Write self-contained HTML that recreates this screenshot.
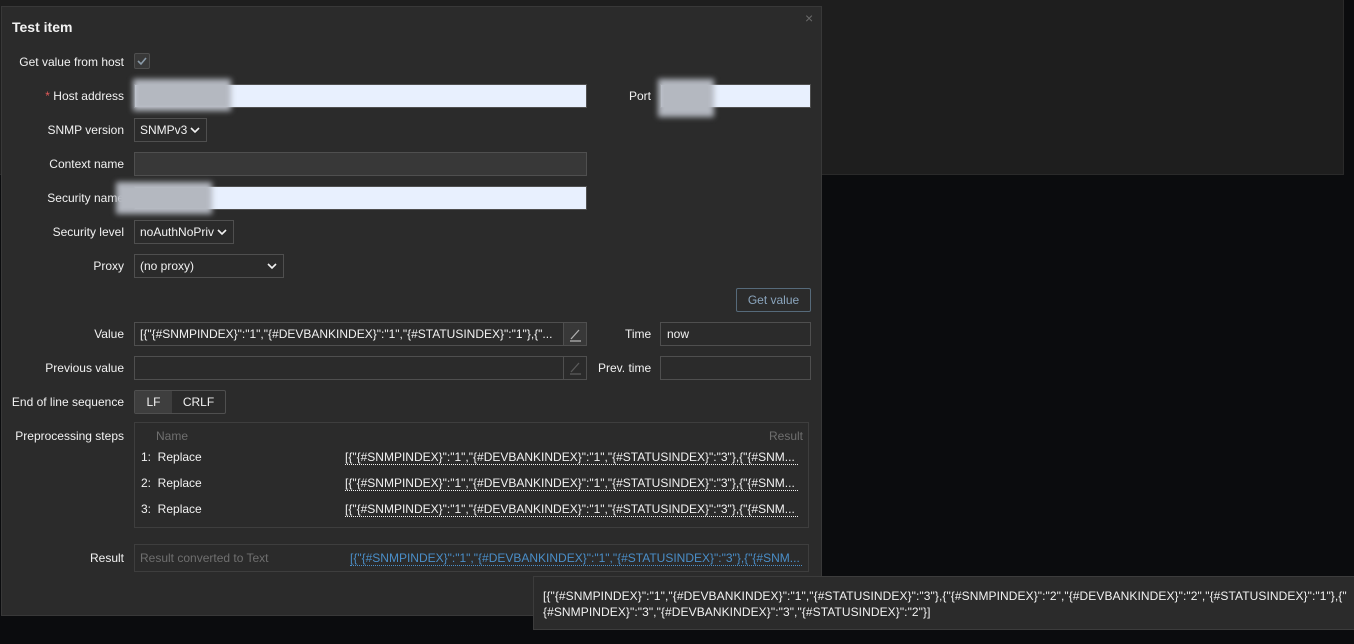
<!DOCTYPE html>
<html><head><meta charset="utf-8"><style>
*{box-sizing:border-box;margin:0;padding:0}
body{width:1354px;height:644px;background:#0b0c0e;font-family:"Liberation Sans",Arial,sans-serif;font-size:12px;color:#f2f2f2;position:relative;overflow:hidden}
.a{position:absolute}
.lbl{position:absolute;right:1230px;text-align:right;white-space:nowrap;color:#f2f2f2}
.inp{position:absolute;border:1px solid #4f4f4f;background:#383838;height:24px;}
.wh{background:#e8f0fe;border-color:#4f4f4f}
.sel{position:absolute;border:1px solid #4f4f4f;background:#2b2b2b;height:24px;padding:4px 5px;white-space:nowrap}
.sel svg{position:absolute;right:6px;top:8px}
.blur{position:absolute;background:#b4b8c0;filter:blur(3px)}
.txt{position:absolute;white-space:nowrap;overflow:hidden}
.dot{border-bottom:1px dotted #f2f2f2;line-height:14px}
</style></head><body>
<div class="a" style="left:0;top:0;width:1344px;height:175px;background:#1e1e1e;border-right:1px solid #2a2a2a;border-bottom:1px solid #2a2a2a"></div>
<div class="a" style="left:1px;top:6px;width:821px;height:610px;background:#2b2b2b;border:1px solid #383838"></div>
<div class="a" style="left:12px;top:19px;font-size:14px;font-weight:bold;color:#f2f2f2">Test item</div>
<div class="a" style="left:805px;top:10px;color:#6a6a6a;font-size:14px">×</div>

<div class="lbl" style="top:55px">Get value from host</div>
<div class="a" style="left:134px;top:53px;width:16px;height:16px;border:1px solid #4f4f4f;background:#383838;border-radius:2px"><svg width="14" height="14" viewBox="0 0 14 14" style="position:absolute;left:0;top:0"><path d="M3 7l3 3 5-6" stroke="#8a9aa8" stroke-width="1.6" fill="none"/></svg></div>

<div class="lbl" style="top:89px"><span style="color:#e45959">*</span> Host address</div>
<div class="inp wh" style="left:134px;top:84px;width:453px"></div>
<div class="blur" style="left:133px;top:79px;width:98px;height:32px"></div>
<div class="a" style="left:629px;top:89px">Port</div>
<div class="inp wh" style="left:660px;top:84px;width:151px"></div>
<div class="blur" style="left:658px;top:79px;width:56px;height:38px"></div>

<div class="lbl" style="top:123px">SNMP version</div>
<div class="sel" style="left:134px;top:118px;width:73px">SNMPv3<svg width="10" height="7"><path d="M1 1l4 4 4-4" stroke="#f2f2f2" stroke-width="1.6" fill="none"/></svg></div>

<div class="lbl" style="top:157px">Context name</div>
<div class="inp" style="left:134px;top:152px;width:453px"></div>

<div class="lbl" style="top:191px">Security name</div>
<div class="inp wh" style="left:134px;top:186px;width:453px"></div>
<div class="blur" style="left:116px;top:182px;width:96px;height:32px"></div>

<div class="lbl" style="top:225px">Security level</div>
<div class="sel" style="left:134px;top:220px;width:100px">noAuthNoPriv<svg width="10" height="7"><path d="M1 1l4 4 4-4" stroke="#f2f2f2" stroke-width="1.6" fill="none"/></svg></div>

<div class="lbl" style="top:259px">Proxy</div>
<div class="sel" style="left:134px;top:254px;width:150px">(no proxy)<svg width="10" height="7"><path d="M1 1l4 4 4-4" stroke="#f2f2f2" stroke-width="1.6" fill="none"/></svg></div>

<div class="a" style="left:736px;top:288px;width:75px;height:24px;border:1px solid #566a7a;border-radius:2px;color:#8aa4bc;text-align:center;line-height:22px">Get value</div>

<div class="lbl" style="top:327px">Value</div>
<div class="inp" style="left:134px;top:322px;width:453px;background:#2b2b2b"></div>
<div class="txt" style="left:140px;top:327px;width:420px">[{"{#SNMPINDEX}":"1","{#DEVBANKINDEX}":"1","{#STATUSINDEX}":"1"},{"...</div>
<div class="a" style="left:563px;top:322px;width:24px;height:24px;border:1px solid #4f4f4f;background:#383838"><svg width="22" height="22"><path d="M7 16L15 7" stroke="#b0b0b0" stroke-width="1.3"/><path d="M6 18h11" stroke="#b0b0b0" stroke-width="1.3"/></svg></div>
<div class="a" style="left:625px;top:327px">Time</div>
<div class="inp" style="left:660px;top:322px;width:151px;background:#2b2b2b"></div>
<div class="a" style="left:667px;top:327px">now</div>

<div class="lbl" style="top:361px">Previous value</div>
<div class="inp" style="left:134px;top:356px;width:453px;background:#2b2b2b"></div>
<div class="a" style="left:563px;top:356px;width:24px;height:24px;border-left:1px solid #4f4f4f"><svg width="22" height="22"><path d="M7 16L15 7" stroke="#5a5a5a" stroke-width="1.3"/><path d="M6 18h11" stroke="#5a5a5a" stroke-width="1.3"/></svg></div>
<div class="a" style="left:598px;top:361px">Prev. time</div>
<div class="inp" style="left:660px;top:356px;width:151px;background:#2b2b2b"></div>

<div class="lbl" style="top:395px">End of line sequence</div>
<div class="a" style="left:134px;top:390px;width:92px;height:24px;border:1px solid #4f4f4f;border-radius:2px;background:#2b2b2b"></div>
<div class="a" style="left:135px;top:391px;width:37px;height:22px;background:#3e3e3e;text-align:center;line-height:22px">LF</div>
<div class="a" style="left:172px;top:391px;width:53px;height:22px;text-align:center;line-height:22px">CRLF</div>

<div class="lbl" style="top:429px">Preprocessing steps</div>
<div class="a" style="left:134px;top:422px;width:675px;height:106px;border:1px solid #3e3e3e"></div>
<div class="a" style="left:156px;top:429px;color:#6f6f6f">Name</div>
<div class="a" style="left:769px;top:429px;color:#6f6f6f">Result</div>
<div class="a" style="left:141px;top:450px">1:&nbsp; Replace</div>
<div class="a" style="left:141px;top:476px">2:&nbsp; Replace</div>
<div class="a" style="left:141px;top:502px">3:&nbsp; Replace</div>
<div class="txt dot" style="left:345px;top:450px;width:453px">[{"{#SNMPINDEX}":"1","{#DEVBANKINDEX}":"1","{#STATUSINDEX}":"3"},{"{#SNM...</div>
<div class="txt dot" style="left:345px;top:476px;width:453px">[{"{#SNMPINDEX}":"1","{#DEVBANKINDEX}":"1","{#STATUSINDEX}":"3"},{"{#SNM...</div>
<div class="txt dot" style="left:345px;top:502px;width:453px">[{"{#SNMPINDEX}":"1","{#DEVBANKINDEX}":"1","{#STATUSINDEX}":"3"},{"{#SNM...</div>

<div class="lbl" style="top:551px">Result</div>
<div class="a" style="left:134px;top:544px;width:675px;height:28px;border:1px solid #3e3e3e"></div>
<div class="a" style="left:140px;top:551px;color:#6f6f6f">Result converted to Text</div>
<div class="txt" style="left:350px;top:551px;width:452px;color:#4a8ec8;border-bottom:1px dotted #4a8ec8;line-height:14px">[{"{#SNMPINDEX}":"1","{#DEVBANKINDEX}":"1","{#STATUSINDEX}":"3"},{"{#SNM...</div>

<div class="a" style="left:533px;top:576px;width:830px;height:54px;background:#2b2b2b;border:1px solid #3c3c3c"></div>
<div class="a" style="left:543px;top:588px;line-height:16px;letter-spacing:0.08px;white-space:nowrap">[{"{#SNMPINDEX}":"1","{#DEVBANKINDEX}":"1","{#STATUSINDEX}":"3"},{"{#SNMPINDEX}":"2","{#DEVBANKINDEX}":"2","{#STATUSINDEX}":"1"},{"<br>{#SNMPINDEX}":"3","{#DEVBANKINDEX}":"3","{#STATUSINDEX}":"2"}]</div>
</body></html>
